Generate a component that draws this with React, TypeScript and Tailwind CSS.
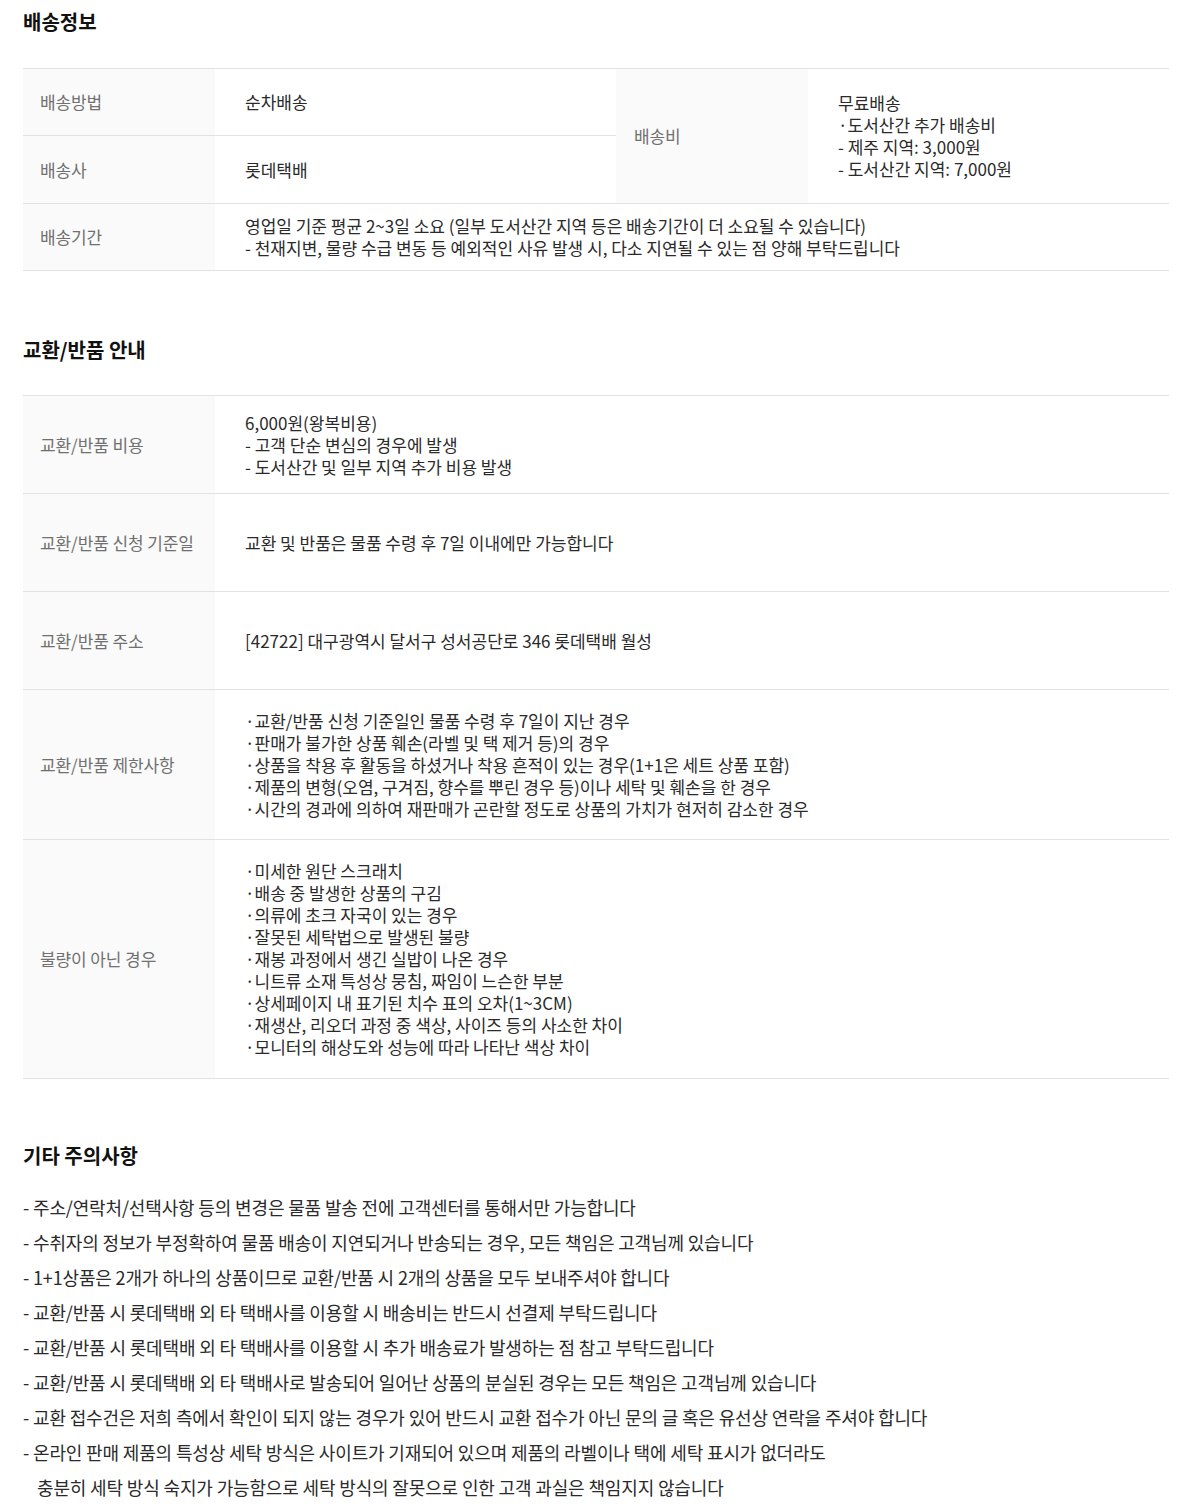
import React from "react";

const font = { fontFamily: '"Noto Sans CJK KR", "Noto Sans", sans-serif' };

function Label({ children, className = "" }: { children: React.ReactNode; className?: string }) {
  return (
    <div className={`flex items-center bg-[#fafafa] pl-[17px] text-[17px] text-[#707070] border-b border-[#e2e2e2] tracking-[-0.1px] ${className}`}>
      {children}
    </div>
  );
}

function Value({ children, className = "" }: { children: React.ReactNode; className?: string }) {
  return (
    <div className={`flex flex-col justify-center pl-[30px] text-[17px] leading-[22px] text-[#2a2a2a] border-b border-[#e2e2e2] ${className}`}>
      {children}
    </div>
  );
}

const restrictions = [
  "·교환/반품 신청 기준일인 물품 수령 후 7일이 지난 경우",
  "·판매가 불가한 상품 훼손(라벨 및 택 제거 등)의 경우",
  "·상품을 착용 후 활동을 하셨거나 착용 흔적이 있는 경우(1+1은 세트 상품 포함)",
  "·제품의 변형(오염, 구겨짐, 향수를 뿌린 경우 등)이나 세탁 및 훼손을 한 경우",
  "·시간의 경과에 의하여 재판매가 곤란할 정도로 상품의 가치가 현저히 감소한 경우",
];

const notDefects = [
  "·미세한 원단 스크래치",
  "·배송 중 발생한 상품의 구김",
  "·의류에 초크 자국이 있는 경우",
  "·잘못된 세탁법으로 발생된 불량",
  "·재봉 과정에서 생긴 실밥이 나온 경우",
  "·니트류 소재 특성상 뭉침, 짜임이 느슨한 부분",
  "·상세페이지 내 표기된 치수 표의 오차(1~3CM)",
  "·재생산, 리오더 과정 중 색상, 사이즈 등의 사소한 차이",
  "·모니터의 해상도와 성능에 따라 나타난 색상 차이",
];

const notes = [
  "- 주소/연락처/선택사항 등의 변경은 물품 발송 전에 고객센터를 통해서만 가능합니다",
  "- 수취자의 정보가 부정확하여 물품 배송이 지연되거나 반송되는 경우, 모든 책임은 고객님께 있습니다",
  "- 1+1상품은 2개가 하나의 상품이므로 교환/반품 시 2개의 상품을 모두 보내주셔야 합니다",
  "- 교환/반품 시 롯데택배 외 타 택배사를 이용할 시 배송비는 반드시 선결제 부탁드립니다",
  "- 교환/반품 시 롯데택배 외 타 택배사를 이용할 시 추가 배송료가 발생하는 점 참고 부탁드립니다",
  "- 교환/반품 시 롯데택배 외 타 택배사로 발송되어 일어난 상품의 분실된 경우는 모든 책임은 고객님께 있습니다",
  "- 교환 접수건은 저희 측에서 확인이 되지 않는 경우가 있어 반드시 교환 접수가 아닌 문의 글 혹은 유선상 연락을 주셔야 합니다",
  "- 온라인 판매 제품의 특성상 세탁 방식은 사이트가 기재되어 있으며 제품의 라벨이나 택에 세탁 표시가 없더라도",
];

export default function App() {
  return (
    <div style={font} className="w-[1200px] bg-white pl-[23px] pt-[8px] pb-[10px]">
      <div className="w-[1146px]">
        <h2 className="text-[20px] leading-[28px] font-bold text-[#111]">배송정보</h2>
        <div className="mt-[32px] border-t border-[#e2e2e2] grid grid-cols-[192px_401px_192px_1fr] grid-rows-[67px_68px_67px]">
          <Label>배송방법</Label>
          <Value>순차배송</Value>
          <Label className="row-span-2 pl-[18px]">배송비</Label>
          <Value className="row-span-2">
            <span>무료배송</span>
            <span>·도서산간 추가 배송비</span>
            <span>- 제주 지역: 3,000원</span>
            <span>- 도서산간 지역: 7,000원</span>
          </Value>
          <Label>배송사</Label>
          <Value>롯데택배</Value>
          <Label>배송기간</Label>
          <Value className="col-span-3">
            <span>영업일 기준 평균 2~3일 소요 (일부 도서산간 지역 등은 배송기간이 더 소요될 수 있습니다)</span>
            <span>- 천재지변, 물량 수급 변동 등 예외적인 사유 발생 시, 다소 지연될 수 있는 점 양해 부탁드립니다</span>
          </Value>
        </div>

        <h2 className="mt-[65px] text-[20px] leading-[28px] font-bold text-[#111]">교환/반품 안내</h2>
        <div className="mt-[31px] border-t border-[#e2e2e2] grid grid-cols-[192px_1fr] grid-rows-[98px_98px_98px_150px_239px]">
          <Label>교환/반품 비용</Label>
          <Value>
            <span>6,000원(왕복비용)</span>
            <span>- 고객 단순 변심의 경우에 발생</span>
            <span>- 도서산간 및 일부 지역 추가 비용 발생</span>
          </Value>
          <Label>교환/반품 신청 기준일</Label>
          <Value>
            <span>교환 및 반품은 물품 수령 후 7일 이내에만 가능합니다</span>
          </Value>
          <Label>교환/반품 주소</Label>
          <Value>
            <span>[42722] 대구광역시 달서구 성서공단로 346 롯데택배 월성</span>
          </Value>
          <Label>교환/반품 제한사항</Label>
          <Value>
            {restrictions.map((t) => (
              <span key={t}>{t}</span>
            ))}
          </Value>
          <Label>불량이 아닌 경우</Label>
          <Value className="leading-[22.3px]">
            {notDefects.map((t) => (
              <span key={t}>{t}</span>
            ))}
          </Value>
        </div>

        <h2 className="mt-[63px] text-[20px] leading-[28px] font-bold text-[#111]">기타 주의사항</h2>
        <ul className="mt-[20px] text-[18px] leading-[35px] text-[#2a2a2a] tracking-[-0.15px]">
          {notes.map((t) => (
            <li key={t}>{t}</li>
          ))}
          <li className="pl-[14px]">충분히 세탁 방식 숙지가 가능함으로 세탁 방식의 잘못으로 인한 고객 과실은 책임지지 않습니다</li>
        </ul>
      </div>
    </div>
  );
}
